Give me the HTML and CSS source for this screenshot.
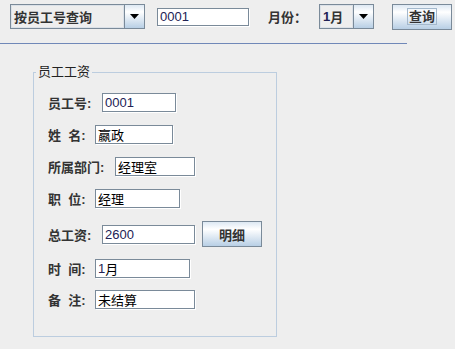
FILE: index.html
```html
<!DOCTYPE html>
<html>
<head>
<meta charset="utf-8">
<link rel="stylesheet" href="styles.css">
</head>
<body>
<div class="topbar">
  <div class="combo combo-type">
    <span class="combo-text">按员工号查询</span>
    <span class="combo-arrow"><svg width="9" height="5" viewBox="0 0 9 5"><path d="M0 0H9L4.5 5Z" fill="#000"/></svg></span>
  </div>
  <div class="field top-field num">0001</div>
  <span class="top-label">月份：</span>
  <div class="combo combo-month">
    <span class="combo-text"><span class="num">1</span>月</span>
    <span class="combo-arrow"><svg width="9" height="5" viewBox="0 0 9 5"><path d="M0 0H9L4.5 5Z" fill="#000"/></svg></span>
  </div>
  <button class="btn btn-query"><span class="focus">查询</span></button>
</div>
<div class="sep"></div>
<fieldset class="group">
  <legend>员工工资</legend>
  <div class="row"><span class="lab lab3">员工号:</span><span class="field f-id num">0001</span></div>
  <div class="row"><span class="lab lab2">姓&nbsp;&nbsp;名:</span><span class="field f-name">嬴政</span></div>
  <div class="row"><span class="lab lab4">所属部门:</span><span class="field f-dept">经理室</span></div>
  <div class="row"><span class="lab lab2">职&nbsp;&nbsp;位:</span><span class="field f-pos">经理</span></div>
  <div class="row row-btn"><span class="lab lab3">总工资:</span><span class="field f-total num">2600</span><button class="btn btn-detail">明细</button></div>
  <div class="row row-after"><span class="lab lab2">时&nbsp;&nbsp;间:</span><span class="field f-time"><span class="num">1</span>月</span></div>
  <div class="row row-after"><span class="lab lab2">备&nbsp;&nbsp;注:</span><span class="field f-note">未结算</span></div>
</fieldset>
</body>
</html>
```

FILE: styles.css
```css
html, body {
  margin: 0;
  padding: 0;
  background: #eeeeee;
  width: 455px;
  height: 349px;
  overflow: hidden;
  font-family: "Liberation Sans", "Noto Sans CJK SC", sans-serif;
  font-size: 12px;
  color: #333333;
}

.topbar {
  display: flex;
  align-items: center;
  height: 27px;
  padding: 3px 0 0 10px;
}

.combo {
  display: flex;
  box-sizing: border-box;
  height: 25px;
  border: 1px solid #7a8a99;
  background: #eeeeee;
}
.combo-type { width: 135px; }
.combo-month { width: 55px; margin-left: 0; }

.combo-text {
  flex: 1;
  display: flex;
  align-items: center;
  padding-left: 2px;
  border: 1px solid #dbe1e8;
  font-size: 13px;
  font-weight: bold;
  color: #333333;
  white-space: nowrap;
  overflow: hidden;
}
.combo-arrow {
  width: 19px;
  display: flex;
  align-items: center;
  justify-content: center;
  border-left: 1px solid #7a8a99;
  background: linear-gradient(#dde8f3 0%, #ffffff 30%, #b8cfe5 100%);
}

.field {
  display: flex;
  align-items: center;
  box-sizing: border-box;
  height: 19px;
  padding-left: 2px;
  border: 1px solid #7a8a99;
  background: #ffffff;
  box-shadow: 1px 1px 0 #ffffff;
  font-size: 13px;
  color: #000000;
  white-space: nowrap;
}
.num { color: #222255; font-size: 13px; }
.top-field { width: 92px; height: 18px; margin-left: 12px; }

.top-label {
  width: 51px;
  margin-left: 19px;
  font-size: 13px;
  font-weight: bold;
  color: #333333;
  white-space: nowrap;
}

.btn {
  box-sizing: border-box;
  border: 1px solid #7a8a99;
  border-radius: 0;
  background: linear-gradient(#dde8f3 0%, #ffffff 30%, #b8cfe5 100%);
  font-family: "Liberation Sans", "Noto Sans CJK SC", sans-serif;
  font-size: 13px;
  font-weight: bold;
  color: #333333;
  padding: 0;
  display: flex;
  align-items: center;
  justify-content: center;
}
.btn-query { width: 60px; height: 26px; margin-left: 18px; }
.focus {
  border: 1px solid #a3b8cc;
  padding: 0 1px;
  line-height: 15px;
}
.btn-detail { width: 60px; height: 26px; margin-left: 7px; }

.sep {
  width: 407px;
  height: 1px;
  margin-top: 13px;
  background: #7088b8;
}

.group {
  box-sizing: border-box;
  width: 244px;
  height: 272px;
  margin: 21px 0 0 33px;
  padding: 14px 0 0 14px;
  border: 1px solid #bccddf;
  display: flex;
  flex-direction: column;
  gap: 13px;
}
.group legend {
  font-size: 13px;
  line-height: 14px;
  padding: 0 2px;
  margin-left: -12px;
  color: #222222;
}

.row {
  display: flex;
  align-items: center;
  height: 19px;
}
.row-btn { height: 26px; }
.row-after { margin-top: -1px; }

.lab {
  font-size: 13px;
  font-weight: bold;
  color: #333333;
  white-space: nowrap;
}
.lab2 { width: 47px; }
.lab3 { width: 54px; }
.lab4 { width: 67px; }

.f-id { width: 74px; }
.f-name { width: 78px; }
.f-dept { width: 80px; }
.f-pos { width: 85px; }
.f-total { width: 93px; }
.f-time { width: 95px; }
.f-note { width: 100px; }
```
